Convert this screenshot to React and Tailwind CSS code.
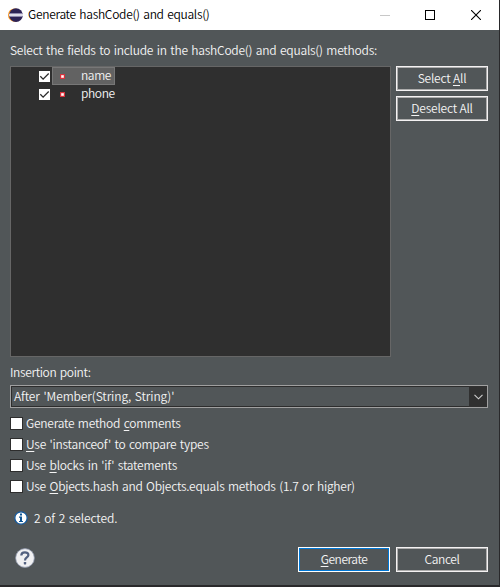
import React from 'react';

function TitleBar() {
  return (
    <header className="flex h-[30px] shrink-0 items-center bg-white pl-2 text-black">
      <svg width="15" height="15" viewBox="0 0 15 15" className="shrink-0">
        <circle cx="6.7" cy="7.1" r="6.7" fill="#f7941e" />
        <circle cx="8" cy="7.1" r="6.8" fill="#2c2255" />
        <rect x="1.4" y="5" width="13" height="4" fill="#8d87ad" />
        <rect x="1" y="6" width="14" height="2" fill="#dddbe9" />
      </svg>
      <h1 className="ml-[5px] flex-1 whitespace-nowrap pb-[2px] leading-[18px] tracking-[-0.3px]">Generate hashCode() and equals()</h1>
      <div className="flex items-center pr-[18px]">
        <span className="mr-[35px] h-px w-[10px] bg-[#c8c8c8]" />
        <span className="mr-[36px] size-[10px] border border-black" />
        <svg width="10" height="10" viewBox="0 0 10 10" stroke="#000" strokeWidth="1.1">
          <path d="M0 0L10 10M10 0L0 10" />
        </svg>
      </div>
    </header>
  );
}

function Mnemonic({ children }) {
  return <span className="underline decoration-1 underline-offset-2">{children}</span>;
}

function Button({ children, primary }) {
  return (
    <button
      className={
        'flex h-[25px] w-[92px] shrink-0 items-center justify-center whitespace-nowrap border bg-[#515658] pb-[2px] ' +
        (primary
          ? 'border-white shadow-[inset_0_0_0_1px_#0078d7]'
          : 'border-[#f4f2f3] shadow-[inset_0_0_0_1px_#adadad]')
      }
    >
      {children}
    </button>
  );
}

function FieldRow({ name, selected }) {
  return (
    <div className="flex h-[18px] items-center pl-[28px]">
      <span className="flex size-[11px] items-center justify-center bg-white">
        <svg width="11" height="11" viewBox="0 0 11 11" fill="none" stroke="#2b2b2b" strokeWidth="1.3">
          <path d="M1.3 5.3L4.1 8.1L9.7 2.5" />
        </svg>
      </span>
      <span
        className={
          'ml-[2px] flex h-[18px] items-center border pr-[3px] ' +
          (selected ? 'border-[#777] bg-[#626262]' : 'border-transparent')
        }
      >
        <svg width="5" height="5" viewBox="0 0 5 5" className="ml-[7px] mr-[16px]">
          <rect width="5" height="5" fill="#d8323c" />
          <rect x="1" y="1" width="3" height="3" fill="#f0a0a4" />
          <rect x="1.5" y="1.5" width="2" height="2" fill="#fff" />
        </svg>
        <span className="pb-[3px] leading-[15px] tracking-[-0.4px]">{name}</span>
      </span>
    </div>
  );
}

function Option({ children }) {
  return (
    <label className="flex h-[21px] items-center">
      <span className="mr-[3px] size-[13px] shrink-0 border border-[#2d2d2d] bg-white" />
      <span className="whitespace-nowrap pb-px leading-[18px] tracking-[-0.24px]">{children}</span>
    </label>
  );
}

export default function App() {
  return (
    <div className="flex h-[587px] w-[500px] flex-col overflow-hidden border-r border-b-2 border-[#29292b] bg-[#515658] font-['Noto_Sans_CJK_KR',sans-serif] text-[12px] font-[350] text-[#f4f4f4] [word-spacing:1.1px]">
      <TitleBar />
      <main className="flex flex-1 flex-col pl-[10px] pr-[11px]">
        <p className="mt-[11px] h-[18px] whitespace-nowrap leading-[18px] tracking-[-0.24px]">
          Select the fields to include in the hashCode() and equals() methods:
        </p>
        <div className="mt-[7px] flex gap-[5px]">
          <div className="h-[291px] w-[381px] border border-[#666] bg-[#2f2f2f]">
            <FieldRow name="name" selected />
            <FieldRow name="phone" />
          </div>
          <div className="flex flex-col gap-[5px]">
            <Button>
              <span className="tracking-[-0.2px]">Select <Mnemonic>A</Mnemonic>ll</span>
            </Button>
            <Button>
              <span className="tracking-[-0.2px]"><Mnemonic>D</Mnemonic>eselect All</span>
            </Button>
          </div>
        </div>
        <p className="mt-[6px] h-[18px] leading-[18px] tracking-[-0.35px]">Insertion point:</p>
        <div className="mt-[4px] flex h-[23px] items-stretch border border-[#a0a0a0]">
          <div className="flex flex-1 items-center border border-r-0 border-[#2d2d2d] pb-[2px] pl-[2px] tracking-[-0.1px]">After 'Member(String, String)'</div>
          <div className="flex w-[18px] items-center justify-center bg-[#303030]">
            <svg width="9" height="6" viewBox="0 0 9 6" fill="none" stroke="#d0d0d0" strokeWidth="1.1">
              <path d="M0.5 0.8L4.5 4.8L8.5 0.8" />
            </svg>
          </div>
        </div>
        <div className="mt-[5px]">
          <Option>Generate method <Mnemonic>c</Mnemonic>omments</Option>
          <Option><Mnemonic>U</Mnemonic>se 'instanceof' to compare types</Option>
          <Option>Use <Mnemonic>b</Mnemonic>locks in 'if' statements</Option>
          <Option>Use <Mnemonic>O</Mnemonic>bjects.hash and Objects.equals methods (1.7 or higher)</Option>
        </div>
        <div className="mt-[12px] flex h-[18px] items-center pl-[4px]">
          <svg width="14" height="14" viewBox="0 0 14 14">
            <circle cx="7" cy="7" r="6.2" fill="#fff" stroke="#14599c" strokeWidth="1.3" />
            <path d="M6 2.6h2v2H6zM5 5.6h3v4.3h1v1.2H5V9.9h1V6.8H5z" fill="#0d5596" />
          </svg>
          <span className="ml-[6px] tracking-[-0.1px]">2 of 2 selected.</span>
        </div>
        <footer className="mt-[20px] flex items-start">
          <svg width="20" height="20" viewBox="0 0 20 20" className="ml-[5px] mt-px">
            <circle cx="10" cy="10" r="9.4" fill="#f0f0f2" stroke="#8a93a8" strokeWidth="0.8" />
            <path d="M6.3 7.4C6.3 3.2 13.6 3.4 13.4 7.1C13.3 9.4 10 9.6 10 12.4" fill="none" stroke="#52607f" strokeWidth="2.2" />
            <rect x="8.8" y="14" width="2.4" height="2.4" rx="0.6" fill="#52607f" />
          </svg>
          <div className="ml-auto flex gap-[6px]">
            <Button primary>
              <span className="tracking-[-0.45px]"><Mnemonic>G</Mnemonic>enerate</span>
            </Button>
            <Button>
              <span className="tracking-[-0.4px]">Cancel</span>
            </Button>
          </div>
        </footer>
      </main>
    </div>
  );
}
